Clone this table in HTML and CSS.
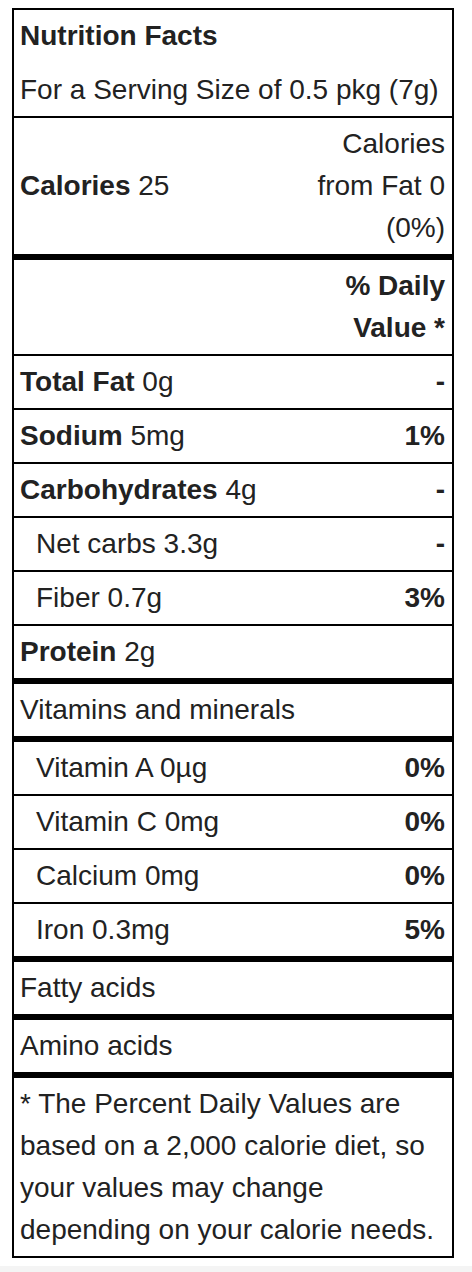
FILE: index.html
```html
<!DOCTYPE html>
<html lang="en">
<head>
    <meta charset="UTF-8">
    <meta name="viewport" content="width=device-width, initial-scale=1.0">
    <title>Nutrition Facts</title>
    <link rel="stylesheet" href="styles.css">
</head>
<body>
    <div class="page">
        <table class="facts">
            <colgroup>
                <col>
                <col class="value-col">
            </colgroup>
            <tr class="title-row">
                <td colspan="2"><b>Nutrition Facts</b></td>
            </tr>
            <tr>
                <td colspan="2">For a Serving Size of 0.5 pkg (7g)</td>
            </tr>
            <tr class="thick">
                <td><b>Calories</b> 25</td>
                <td class="value light">Calories from Fat 0 (0%)</td>
            </tr>
            <tr>
                <td></td>
                <td class="value">% Daily Value *</td>
            </tr>
            <tr>
                <td><b>Total Fat</b> 0g</td>
                <td class="value">-</td>
            </tr>
            <tr>
                <td><b>Sodium</b> 5mg</td>
                <td class="value">1%</td>
            </tr>
            <tr>
                <td><b>Carbohydrates</b> 4g</td>
                <td class="value">-</td>
            </tr>
            <tr>
                <td class="sub">Net carbs 3.3g</td>
                <td class="value">-</td>
            </tr>
            <tr>
                <td class="sub">Fiber 0.7g</td>
                <td class="value">3%</td>
            </tr>
            <tr class="thick">
                <td><b>Protein</b> 2g</td>
                <td></td>
            </tr>
            <tr class="thick">
                <td colspan="2">Vitamins and minerals</td>
            </tr>
            <tr>
                <td class="sub">Vitamin A 0&micro;g</td>
                <td class="value">0%</td>
            </tr>
            <tr>
                <td class="sub">Vitamin C 0mg</td>
                <td class="value">0%</td>
            </tr>
            <tr>
                <td class="sub">Calcium 0mg</td>
                <td class="value">0%</td>
            </tr>
            <tr class="thick">
                <td class="sub">Iron 0.3mg</td>
                <td class="value">5%</td>
            </tr>
            <tr class="thick">
                <td colspan="2">Fatty acids</td>
            </tr>
            <tr class="thick">
                <td colspan="2">Amino acids</td>
            </tr>
            <tr>
                <td colspan="2" class="note">* The Percent Daily Values are based on a 2,000 calorie diet, so your values may change depending on your calorie needs.</td>
            </tr>
        </table>
    </div>
</body>
</html>
```

FILE: styles.css
```css
html {
    background: #f4f4f4;
}

body {
    margin: 0;
    font-family: "Liberation Sans", Arial, sans-serif;
    color: #222;
}

.page {
    background: #fff;
    padding: 8px 18px 8px 12px;
}

.facts {
    width: 442px;
    border-collapse: collapse;
    border: 2px solid #000;
    table-layout: fixed;
    font-size: 28px;
    line-height: 42px;
}

.value-col {
    width: 153px;
}

.facts tr {
    border-top: 2px solid #000;
}

.facts tr.title-row {
    border-top: none;
}

.facts tr.title-row td {
    padding-bottom: 7px;
}

.facts tr.title-row + tr {
    border-top: none;
}

.facts tr.thick {
    border-bottom: 6px solid #000;
}

.facts td {
    padding: 5px 7px 5px 6px;
    vertical-align: middle;
}

.facts td.sub {
    padding-left: 22px;
}

.value {
    text-align: right;
    font-weight: bold;
}

.value.light {
    font-weight: normal;
}

.note {
    text-align: left;
}
```
